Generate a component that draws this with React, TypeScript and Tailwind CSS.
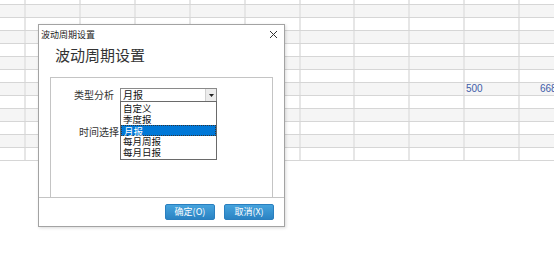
import React from 'react'

const cols = [26, 55, 55, 55, 55, 55, 54, 55, 55, 55, 55]
const rowCount = 12

const font = { fontFamily: '"Noto Sans CJK SC", "Liberation Sans", sans-serif' }

function Sheet() {
  return (
    <div className="flex flex-col">
      {/* partial top row */}
      <div className="flex h-[5px] border-b border-[#d6d6d6] bg-white">
        {cols.map((w, i) => (
          <div key={i} className="shrink-0 border-r-2 border-[#e6e6e6]" style={{ width: w }} />
        ))}
      </div>
      {Array.from({ length: rowCount }).map((_, r) => (
        <div
          key={r}
          className={
            'flex h-[13px] border-b border-[#d6d6d6] ' + (r % 2 === 0 ? 'bg-[#f5f5f5]' : 'bg-white')
          }
        >
          {cols.map((w, i) => (
            <div
              key={i}
              className="shrink-0 border-r-2 border-[#e6e6e6] text-[10px] leading-[12px] text-[#3d5ca8]"
              style={{ width: w, fontFamily: '"Liberation Sans", Arial, sans-serif' }}
            >
              {r === 6 && i === 9 && <span className="pl-[1px]">500</span>}
              {r === 6 && i === 10 && <span className="pl-[20px]">6688</span>}
            </div>
          ))}
        </div>
      ))}
    </div>
  )
}

const options = ['自定义', '季度报', '月报', '每月周报', '每月日报']

export default function App() {
  return (
    <div className="relative h-[256px] w-[554px] overflow-hidden bg-white" style={font}>
      <Sheet />

      {/* Dialog */}
      <div className="absolute left-[38px] top-[24px] flex h-[203px] w-[247px] flex-col border border-[#a3a3a3] bg-white shadow-[1px_1px_3px_rgba(0,0,0,0.15)]">
        {/* Title bar */}
        <div className="flex h-[18px] items-center justify-between pl-[2px] pr-[6px]">
          <span className="text-[9px] leading-none text-[#222]">波动周期设置</span>
          <svg width="9" height="9" viewBox="0 0 9 9" className="text-[#333]">
            <path d="M1 1L8 8M8 1L1 8" stroke="currentColor" strokeWidth="1" />
          </svg>
        </div>

        {/* Heading */}
        <div className="mt-[2px] h-[20px] pl-[16px] text-[15px] leading-[20px] text-[#333]">波动周期设置</div>

        {/* Group panel */}
        <div className="relative mx-[11px] mt-[12px] flex h-[120px] flex-col border-l border-r border-t border-[#c4c4c4]">
          <div className="mt-[10px] flex items-center">
            <span className="w-[66px] pr-[3px] text-right text-[10px] leading-[14px] text-[#333]">类型分析</span>
            <div className="ml-[3px] flex h-[14px] w-[97px] items-stretch border border-[#8a8a8a] bg-white">
              <span className="flex-1 pl-[2px] text-[10px] leading-[12px] text-[#111]">月报</span>
              <div className="flex w-[11px] items-center justify-center border-l border-[#d0d0d0] bg-[#ececec]">
                <svg width="5" height="3" viewBox="0 0 5 3">
                  <path d="M0 0H5L2.5 3Z" fill="#222" />
                </svg>
              </div>
            </div>
          </div>
          <div className="mt-[23px] flex items-center">
            <span className="w-[68px] text-right text-[10px] leading-[14px] text-[#333]">时间选择</span>
          </div>

          {/* Dropdown list */}
          <div className="absolute left-[69px] top-[23px] flex w-[97px] flex-col border border-[#6a6a6a] bg-white py-[1px]">
            {options.map((o) => (
              <div
                key={o}
                className={
                  'h-[11px] pl-[2px] text-[9.5px] leading-[11px] ' +
                  (o === '月报'
                    ? 'border border-dotted border-[#333] bg-[#0078d7] pl-[1px] leading-[9px] text-white'
                    : 'text-[#111]')
                }
              >
                {o}
              </div>
            ))}
          </div>
        </div>

        {/* Footer */}
        <div className="flex flex-1 items-start justify-end gap-[9px] border-t border-[#c4c4c4] pr-[10px] pt-[6px]">
          <button className="h-[16px] w-[50px] rounded-[2px] border border-[#2a7fbf] bg-gradient-to-b from-[#45a3dd] to-[#2b83c3] text-[9px] leading-[14px] text-white">
            确定(O)
          </button>
          <button className="h-[16px] w-[50px] rounded-[2px] border border-[#2a7fbf] bg-gradient-to-b from-[#45a3dd] to-[#2b83c3] text-[9px] leading-[14px] text-white">
            取消(X)
          </button>
        </div>
      </div>
    </div>
  )
}
